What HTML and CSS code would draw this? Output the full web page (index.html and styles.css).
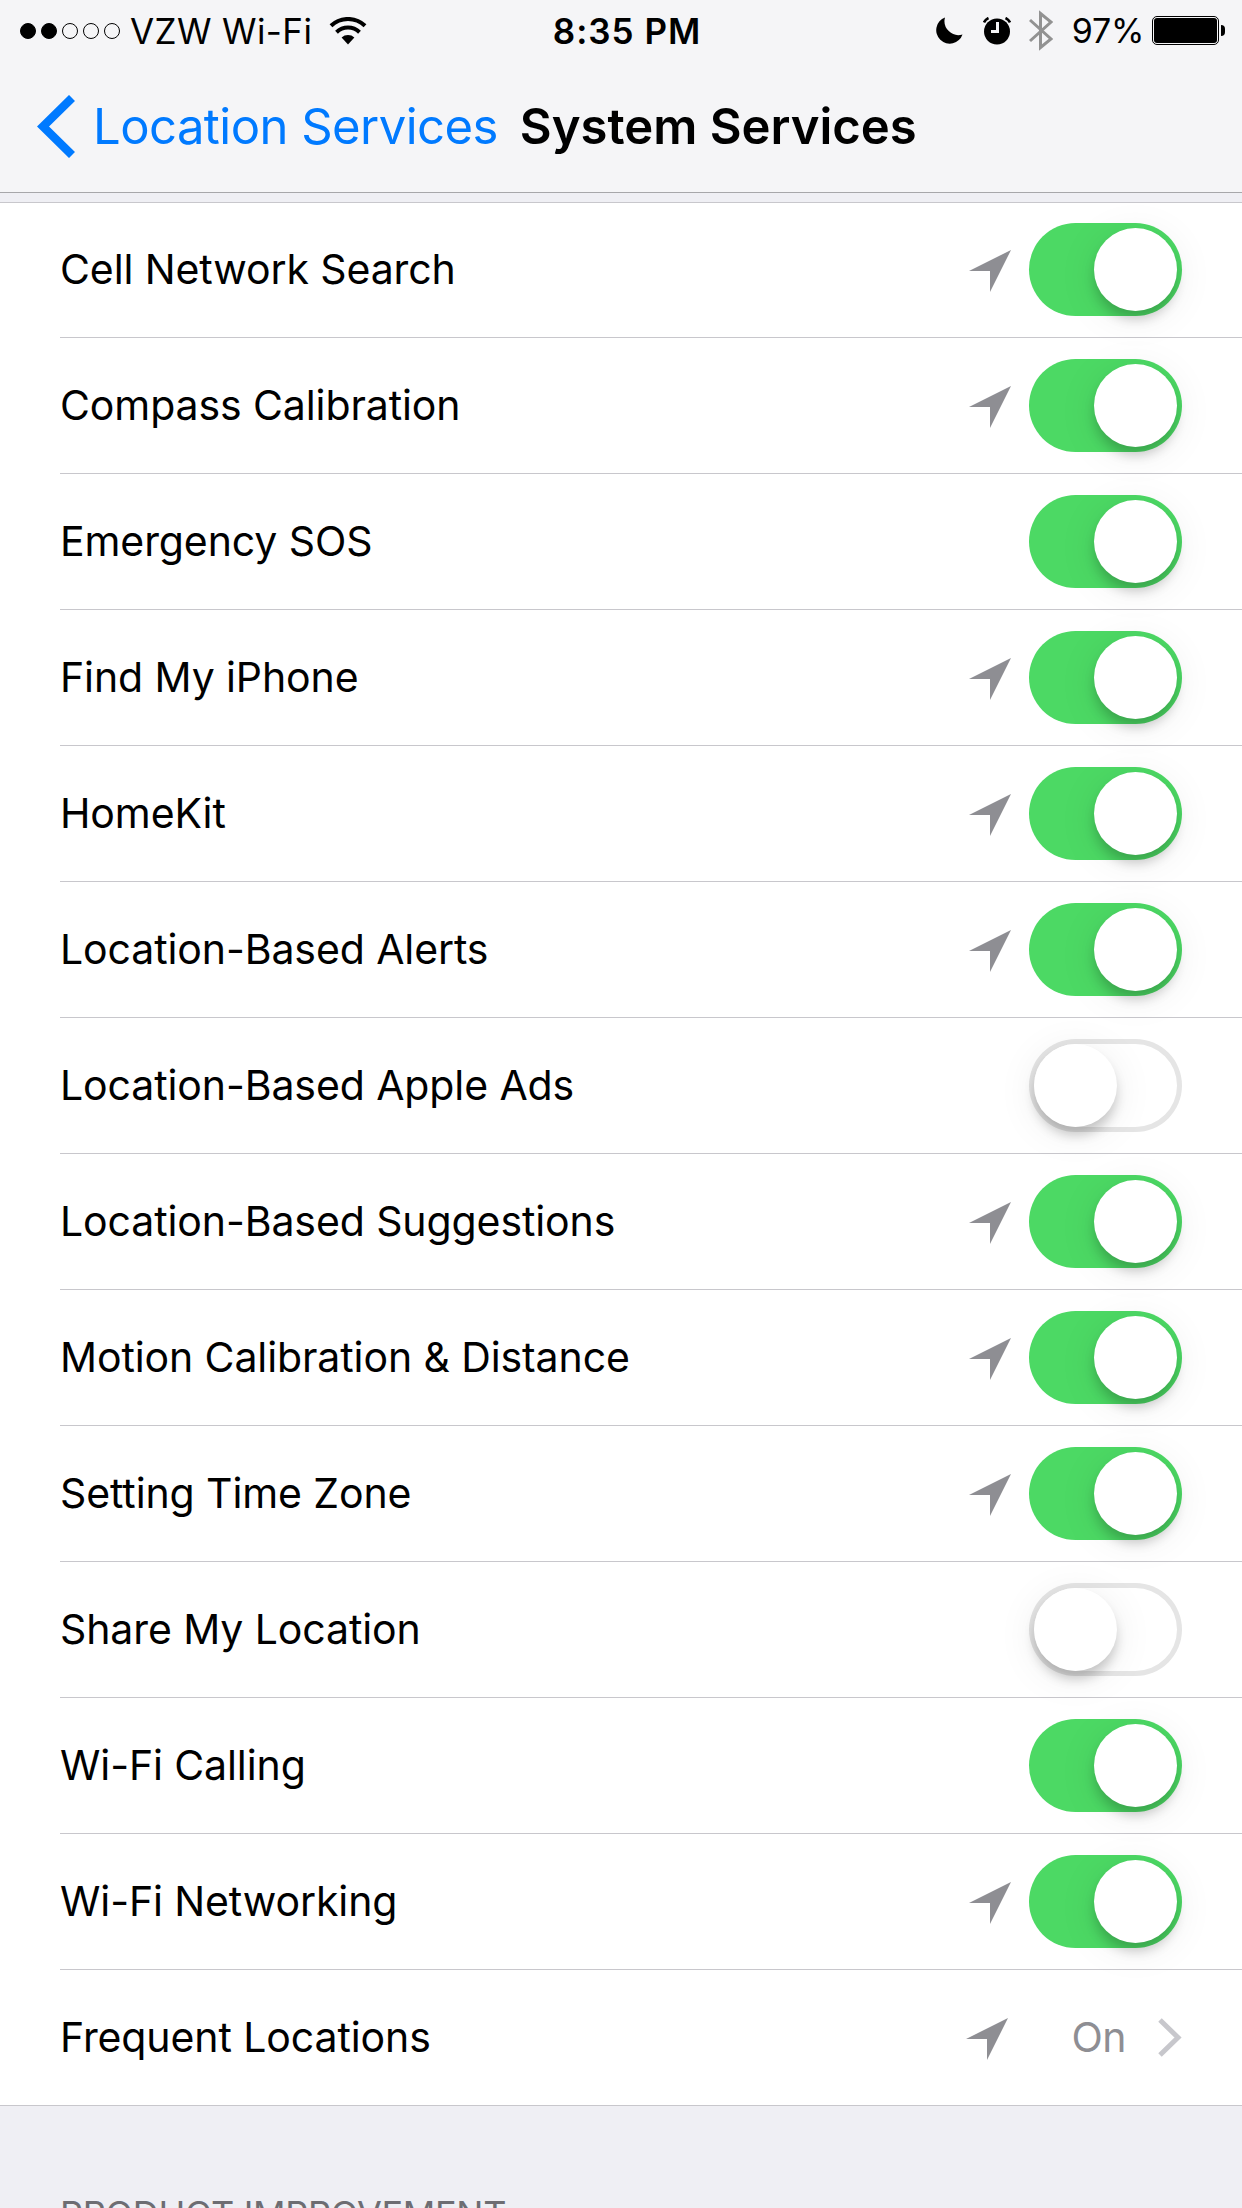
FILE: index.html
```
<!DOCTYPE html>
<html lang="en">
<head>
    <meta charset="UTF-8">
    <meta name="viewport" content="width=device-width, initial-scale=1.0">
    <title>System Services</title>
    <link rel="stylesheet" href="styles.css">
</head>
<body>
    <svg class="sprite">
        <symbol id="arrow" viewBox="0 0 42 42"><path d="M42 0 0 21h21v21z"/></symbol>
    </svg>
    <header class="header">
        <div class="status">
            <div class="status-left">
                <div class="signal"><i class="on"></i><i class="on"></i><i></i><i></i><i></i></div>
                <span class="carrier">VZW Wi-Fi</span>
                <svg class="wifi" viewBox="0 0 38 28">
                    <path d="M2 8.800a24.500 24.500 0 0 1 34 0M7.500 15.200a16.500 16.500 0 0 1 23 0" fill="none" stroke="#000" stroke-width="4"/>
                    <path d="M19 27.500 12.600 20.500a9.500 9.500 0 0 1 12.800 0z"/>
                </svg>
            </div>
            <span class="time">8:35 PM</span>
            <div class="status-right">
                <svg class="moon" viewBox="0 0 28 28"><path d="M10 .5A13.500 13.500 0 1 0 27.500 17.500 14 14 0 0 1 10 .5z"/></svg>
                <svg class="alarm" viewBox="0 0 28 28">
                    <circle cx="14" cy="14.500" r="13"/>
                    <path d="M1 5.500A9 9 0 0 1 5.500 1M27 5.500A9 9 0 0 0 22.500 1" fill="none" stroke="#000" stroke-width="2.600"/>
                    <path d="M14.500 5v9.500H8" fill="none" stroke="#f5f5f7" stroke-width="3"/>
                </svg>
                <svg class="bluetooth" viewBox="0 0 24 41"><path d="M1 10 22 29 11.500 37.500V3.500L22 12 1 31" fill="none" stroke="#929292" stroke-width="3"/></svg>
                <span class="percent">97%</span>
                <div class="battery"></div>
            </div>
        </div>
        <nav class="nav">
            <svg class="back" viewBox="0 0 38 63"><path d="M35 3 6 31.500 35 60" fill="none" stroke="#007aff" stroke-width="8.500"/></svg>
            <a class="back-label">Location Services</a>
            <h1 class="title">System Services</h1>
        </nav>
    </header>
    <ul class="list">
        <li class="row"><span class="label">Cell Network Search</span><svg class="arrow"><use href="#arrow"/></svg><div class="switch on"></div></li>
        <li class="row"><span class="label">Compass Calibration</span><svg class="arrow"><use href="#arrow"/></svg><div class="switch on"></div></li>
        <li class="row"><span class="label">Emergency SOS</span><div class="switch on"></div></li>
        <li class="row"><span class="label">Find My iPhone</span><svg class="arrow"><use href="#arrow"/></svg><div class="switch on"></div></li>
        <li class="row"><span class="label">HomeKit</span><svg class="arrow"><use href="#arrow"/></svg><div class="switch on"></div></li>
        <li class="row"><span class="label">Location-Based Alerts</span><svg class="arrow"><use href="#arrow"/></svg><div class="switch on"></div></li>
        <li class="row"><span class="label">Location-Based Apple Ads</span><div class="switch"></div></li>
        <li class="row"><span class="label">Location-Based Suggestions</span><svg class="arrow"><use href="#arrow"/></svg><div class="switch on"></div></li>
        <li class="row"><span class="label">Motion Calibration &amp; Distance</span><svg class="arrow"><use href="#arrow"/></svg><div class="switch on"></div></li>
        <li class="row"><span class="label">Setting Time Zone</span><svg class="arrow"><use href="#arrow"/></svg><div class="switch on"></div></li>
        <li class="row"><span class="label">Share My Location</span><div class="switch"></div></li>
        <li class="row"><span class="label">Wi-Fi Calling</span><div class="switch on"></div></li>
        <li class="row"><span class="label">Wi-Fi Networking</span><svg class="arrow"><use href="#arrow"/></svg><div class="switch on"></div></li>
        <li class="row"><span class="label">Frequent Locations</span><svg class="arrow arrow-link"><use href="#arrow"/></svg><span class="value">On</span><svg class="chevron" viewBox="0 0 24 39"><path d="M2 2 20 19.500 2 37" fill="none" stroke="#c7c7cc" stroke-width="5"/></svg></li>
    </ul>
    <h2 class="group-title">PRODUCT IMPROVEMENT</h2>
</body>
</html>
```
FILE: styles.css
```
* {
    box-sizing: border-box;
}
html,body {
    margin: 0;
    padding: 0;
}
body {
    width: 1242px;
    height: 2208px;
    overflow: hidden;
    background: #efeff4;
    color: #000;
    font-family: Inter, Roboto, "Liberation Sans", sans-serif;
}
svg {
    display: block;
    flex: none;
}
.sprite {
    display: none;
}
.header {
    height: 193px;
    background: #f5f5f7;
    border-bottom: 1px solid #a7a7aa;
}
.status {
    height: 60px;
    display: grid;
    grid-template-columns: 1fr auto 1fr;
    align-items: center;
    padding: 1px 17px 0 20px;
    font-size: 35px;
}
.status-left,
.status-right {
    display: flex;
    align-items: center;
}
.status-right {
    justify-content: flex-end;
}
.signal {
    display: flex;
    gap: 5px;
}
.signal i {
    width: 16px;
    height: 16px;
    border: 1px solid #000;
    border-radius: 50%;
}
.signal .on {
    background: #000;
}
.carrier {
    margin-left: 10px;
    letter-spacing: .4px;
}
.wifi {
    width: 38px;
    height: 28px;
    margin-left: 17px;
}
.time {
    margin-left: 9px;
    font-weight: 600;
    letter-spacing: 1px;
}
.moon {
    width: 28px;
    height: 28px;
}
.alarm {
    width: 28px;
    height: 28px;
    margin-left: 20px;
}
.bluetooth {
    width: 24px;
    height: 41px;
    margin-left: 18px;
}
.percent {
    margin-left: 19px;
    font-size: 34px;
    letter-spacing: -.3px;
}
.battery {
    position: relative;
    width: 67px;
    height: 29px;
    margin: 0 6px 0 8px;
    padding: 1px;
    border: 1px solid #000;
    border-radius: 5px;
    background: #000 content-box;
}
.battery::after {
    content: "";
    position: absolute;
    right: -7px;
    top: 8px;
    width: 4px;
    height: 11px;
    border-radius: 0 4px 4px 0;
    background: #000;
}
.nav {
    height: 132px;
    display: flex;
    align-items: center;
    padding-left: 37px;
    font-size: 49px;
}
.back {
    width: 38px;
    height: 63px;
}
.back-label {
    margin-left: 18px;
    color: #007aff;
    letter-spacing: -.55px;
}
.title {
    margin: 0 0 0 22px;
    font-size: 49px;
    font-weight: 600;
}
.list {
    margin: 9px 0 0;
    padding: 0;
    list-style: none;
    background: #fff;
    box-shadow: inset 0 1px #c8c7cc, inset 0 -1px #c8c7cc;
}
.row {
    height: 136px;
    display: flex;
    align-items: center;
    margin-left: 60px;
    padding-right: 60px;
    border-bottom: 1px solid #c8c7cc;
}
.row:last-child {
    border-bottom-color: transparent;
}
.label {
    margin-right: auto;
    padding-bottom: 1px;
    font-size: 41px;
    letter-spacing: -.1px;
}
.arrow {
    width: 42px;
    height: 42px;
    margin: 3px 18px 0 0;
    fill: #8e8e93;
}
.arrow-link {
    margin-right: 63px;
}
.switch {
    width: 153px;
    height: 93px;
    padding: 5px;
    border-radius: 47px;
    background: #fff;
    box-shadow: inset 0 0 0 5px #e5e5e5;
}
.switch::before {
    content: "";
    display: block;
    width: 83px;
    height: 83px;
    border-radius: 50%;
    background: #fff;
    box-shadow: 0 9px 12px -1px rgba(0, 0, 0, .2), 0 6px 40px rgba(0, 0, 0, .08);
}
.switch.on {
    background: #4cd964;
    box-shadow: none;
}
.switch.on::before {
    margin-left: 60px;
}
.value {
    padding-bottom: 1px;
    font-size: 41px;
    letter-spacing: -.5px;
    color: #8e8e93;
}
.chevron {
    width: 24px;
    height: 39px;
    margin-left: 32px;
}
.group-title {
    margin: 86px 0 0 60px;
    font-size: 36px;
    font-weight: 400;
    letter-spacing: -.3px;
    color: #6d6d72;
    white-space: nowrap;
}
```
